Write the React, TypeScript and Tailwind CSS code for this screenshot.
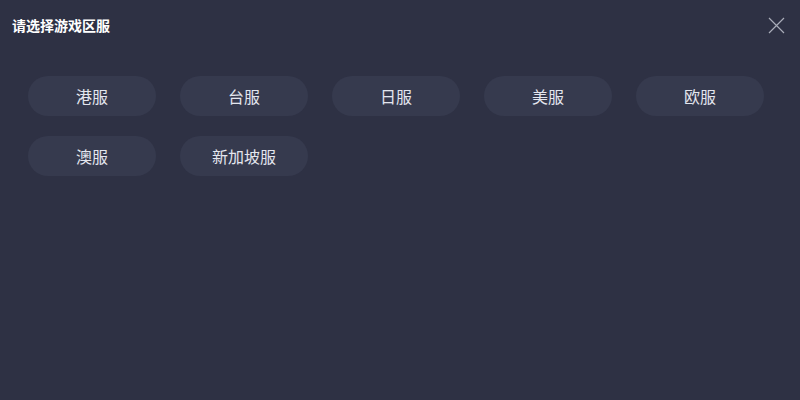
export default function App() {
  const regions = ["港服", "台服", "日服", "美服", "欧服", "澳服", "新加坡服"];

  return (
    <div
      className="h-[400px] w-[800px] bg-[#2e3144] text-white"
      style={{ fontFamily: '"Noto Sans CJK SC", "Noto Sans", sans-serif' }}
    >
      <div className="flex h-[50px] items-center justify-between pl-3 pr-[15px]">
        <h1 className="text-[14px] font-bold">请选择游戏区服</h1>
        <button type="button" className="text-[#a9acb8]">
          <svg width="17" height="17" viewBox="0 0 17 17" fill="none" stroke="currentColor" strokeWidth="1.2">
            <path d="M1 1L16 16M16 1L1 16" />
          </svg>
        </button>
      </div>
      <div className="grid grid-cols-[repeat(5,128px)] gap-x-6 gap-y-5 px-7 pt-[26px]">
        {regions.map((r) => (
          <button
            key={r}
            type="button"
            className="flex h-10 items-center justify-center rounded-full bg-[#363a4e] text-[16px] text-[#e4e6ee]"
          >
            {r}
          </button>
        ))}
      </div>
    </div>
  );
}
